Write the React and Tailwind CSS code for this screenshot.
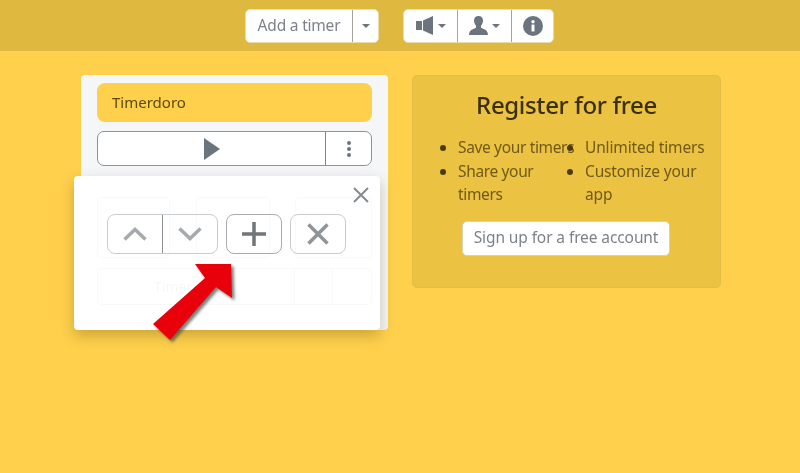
import React from 'react';

const Caret = () => (
  <svg width="8" height="4" viewBox="0 0 8 4" className="ml-[4px]">
    <path d="M0 0h8L4 4z" fill="#6c757d" />
  </svg>
);

// Ghost of the timer card that shows through the popover
function GhostTimer() {
  return (
    <div className="absolute inset-0 opacity-[0.035] pointer-events-none">
      <div className="absolute left-[23px] top-[21px] w-[73px] h-[61px] border border-gray-500 rounded" />
      <div className="absolute left-[122px] top-[21px] w-[74px] h-[61px] border border-gray-500 rounded" />
      <div className="absolute left-[221px] top-[21px] w-[77px] h-[61px] border border-gray-500 rounded" />
      <div className="absolute left-[23px] top-[92px] w-[275px] h-[37px] border border-gray-500 rounded flex items-center text-sm text-gray-700">
        <span className="ml-[56px] flex-1">Timer</span>
        <span className="w-[39px] h-full border-x border-gray-500" />
        <span className="w-[38px]" />
      </div>
    </div>
  );
}

function RedArrow() {
  return (
    <svg className="absolute left-[148px] top-[260px] pointer-events-none" width="96" height="90" viewBox="148 260 96 90">
      <polygon points="195,264 231,264 232,298 216,287 170,340 153,324 205,278" fill="#3f4a3f" opacity="0.7" transform="translate(2.500 2.500)" style={{ filter: 'blur(1.5px)' }} />
      <polygon points="195,264 231,264 232,298 216,287 170,340 153,324 205,278" fill="#e8000b" />
    </svg>
  );
}

export default function App() {
  return (
    <div className="relative min-h-[473px] bg-[#ffd04c] overflow-hidden blur-[0.5px]" style={{ fontFamily: '"Noto Sans", "Open Sans", sans-serif' }}>
      {/* Top bar */}
      <header className="h-[51px] bg-[#dfb840] flex items-center justify-center gap-[24px] pr-[1px]">
        <div className="flex h-[34px] bg-white rounded-[5px] border border-[#e8dcae] text-[#7c8288]">
          <button className="w-[107px] text-[15.5px] tracking-[-0.2px] border-r border-[#a5a59c]">Add a timer</button>
          <button className="w-[25px] flex items-center justify-center"><span className="-ml-[4px]"><Caret /></span></button>
        </div>
        <div className="flex h-[34px] bg-white rounded-[5px] border border-[#e8dcae]">
          <button className="w-[54px] flex items-center justify-center border-r border-[#a5a59c]">
            <svg width="18" height="19" viewBox="0 0 18 19"><path d="M0 5h6v9H0zM7 4.500l10-4.500v19l-10-4.500z" fill="#6c757d" /></svg>
            <Caret />
          </button>
          <button className="w-[54px] flex items-center justify-center border-r border-[#a5a59c]">
            <svg width="19" height="19" viewBox="0 0 19 19" className="-ml-[1px]"><path d="M9.500 0c3 0 4.500 2 4.500 4.500 0 2.200-1 4-2 5.200v2c1 1 7 1.300 7 7.300H0c0-6 6-6.300 7-7.300v-2c-1-1.200-2-3-2-5.200C5 2 6.500 0 9.500 0z" fill="#6c757d" /></svg>
            <Caret />
          </button>
          <button className="w-[41px] flex items-center justify-center">
            <svg width="20" height="20" viewBox="0 0 20 20"><circle cx="10" cy="10" r="10" fill="#6c757d" /><rect x="8.500" y="8.500" width="3" height="7" rx="0.500" fill="#fff" /><circle cx="10" cy="5.800" r="1.700" fill="#fff" /></svg>
          </button>
        </div>
      </header>

      <main className="flex items-start gap-[24px] pl-[81px] pt-[24px]">
        {/* Timer card */}
        <section className="relative w-[307px] h-[255px] bg-[#f5f6f8] rounded-[4px] pt-[8px] px-[16px]">
          <div className="h-[39px] bg-[#ffd04c] rounded-[8px] flex items-center pl-[15px] text-[15px] text-[#5c4a10]">Timerdoro</div>
          <div className="mt-[9px] h-[35px] flex bg-white border border-[#8d9298] rounded-[7px]">
            <button className="flex-1 flex items-center justify-center border-r border-[#7d838a]">
              <svg width="18" height="22" viewBox="0 0 18 22"><path d="M1 0l16 11L1 22z" fill="#6c757d" /></svg>
            </button>
            <button className="w-[45px] flex items-center justify-center">
              <svg width="4" height="18" viewBox="0 0 4 18" fill="#6c757d"><circle cx="2" cy="3" r="2" /><circle cx="2" cy="9" r="2" /><circle cx="2" cy="15" r="2" /></svg>
            </button>
          </div>

          {/* Popover */}
          <div className="absolute left-[-7px] top-[101px] w-[306px] h-[154px] bg-white rounded-[4px] shadow-[0_6px_14px_rgba(90,70,10,0.3)] pt-[38px] pl-[33px]">
            <GhostTimer />
            <button className="absolute right-[11px] top-[11px]">
              <svg width="16" height="16" viewBox="0 0 16 16" stroke="#868b90" strokeWidth="2" fill="none"><path d="M1 1l14 14M15 1L1 15" /></svg>
            </button>
            <div className="relative flex">
              <div className="flex h-[40px] w-[111px] border border-[#c9cccf] rounded-[8px]">
                <button className="w-[55px] flex items-center justify-center border-r border-[#8d9195]">
                  <svg width="24" height="14" viewBox="0 0 24 14" stroke="#a6aaae" strokeWidth="3.500" fill="none"><path d="M1.500 12.500L12 2.500l10.500 10" /></svg>
                </button>
                <button className="flex-1 flex items-center justify-center">
                  <svg width="24" height="14" viewBox="0 0 24 14" stroke="#a6aaae" strokeWidth="3.500" fill="none"><path d="M1.500 1.500L12 11.500l10.500-10" /></svg>
                </button>
              </div>
              <button className="ml-[8px] w-[56px] h-[40px] flex items-center justify-center border border-[#a8acb0] rounded-[8px]">
                <svg width="24" height="24" viewBox="0 0 24 24" stroke="#70767c" strokeWidth="3.500" fill="none"><path d="M0 12h24M12 0v24" /></svg>
              </button>
              <button className="ml-[8px] w-[56px] h-[40px] flex items-center justify-center border border-[#c9cccf] rounded-[8px]">
                <svg width="22" height="22" viewBox="0 0 22 22" stroke="#8f9499" strokeWidth="3.500" fill="none"><path d="M1.500 1.500l19 19M20.500 1.500l-19 19" /></svg>
              </button>
            </div>
          </div>
        </section>

        {/* Register card */}
        <section className="w-[309px] h-[213px] bg-[#ecc243] border border-[#e4bd48] rounded-[5px] pt-[11px] px-[32px]">
          <h2 className="text-[24px] leading-[36px] font-medium text-center text-[#3a3010] tracking-[-0.35px]">Register for free</h2>
          <div className="mt-[13px] grid grid-cols-[127px_1fr] text-[15.500px] leading-[23.500px] text-[#6f5a17]">
            <ul className="list-disc pl-[13px] tracking-[-0.35px] marker:text-[#4a3c10]">
              <li className="whitespace-nowrap">Save your timers</li>
              <li className="pr-[20px]">Share your timers</li>
            </ul>
            <ul className="list-disc pl-[13px] tracking-[-0.15px] marker:text-[#4a3c10]">
              <li className="whitespace-nowrap">Unlimited timers</li>
              <li>Customize your app</li>
            </ul>
          </div>
          <div className="mt-[14px] flex justify-center pr-[1px]">
            <button className="w-[208px] h-[35px] bg-white rounded-[5px] border border-[#d9d2b4] text-[15.500px] text-[#7c8288] tracking-[-0.1px]">Sign up for a free account</button>
          </div>
        </section>
      </main>

      <RedArrow />
    </div>
  );
}
